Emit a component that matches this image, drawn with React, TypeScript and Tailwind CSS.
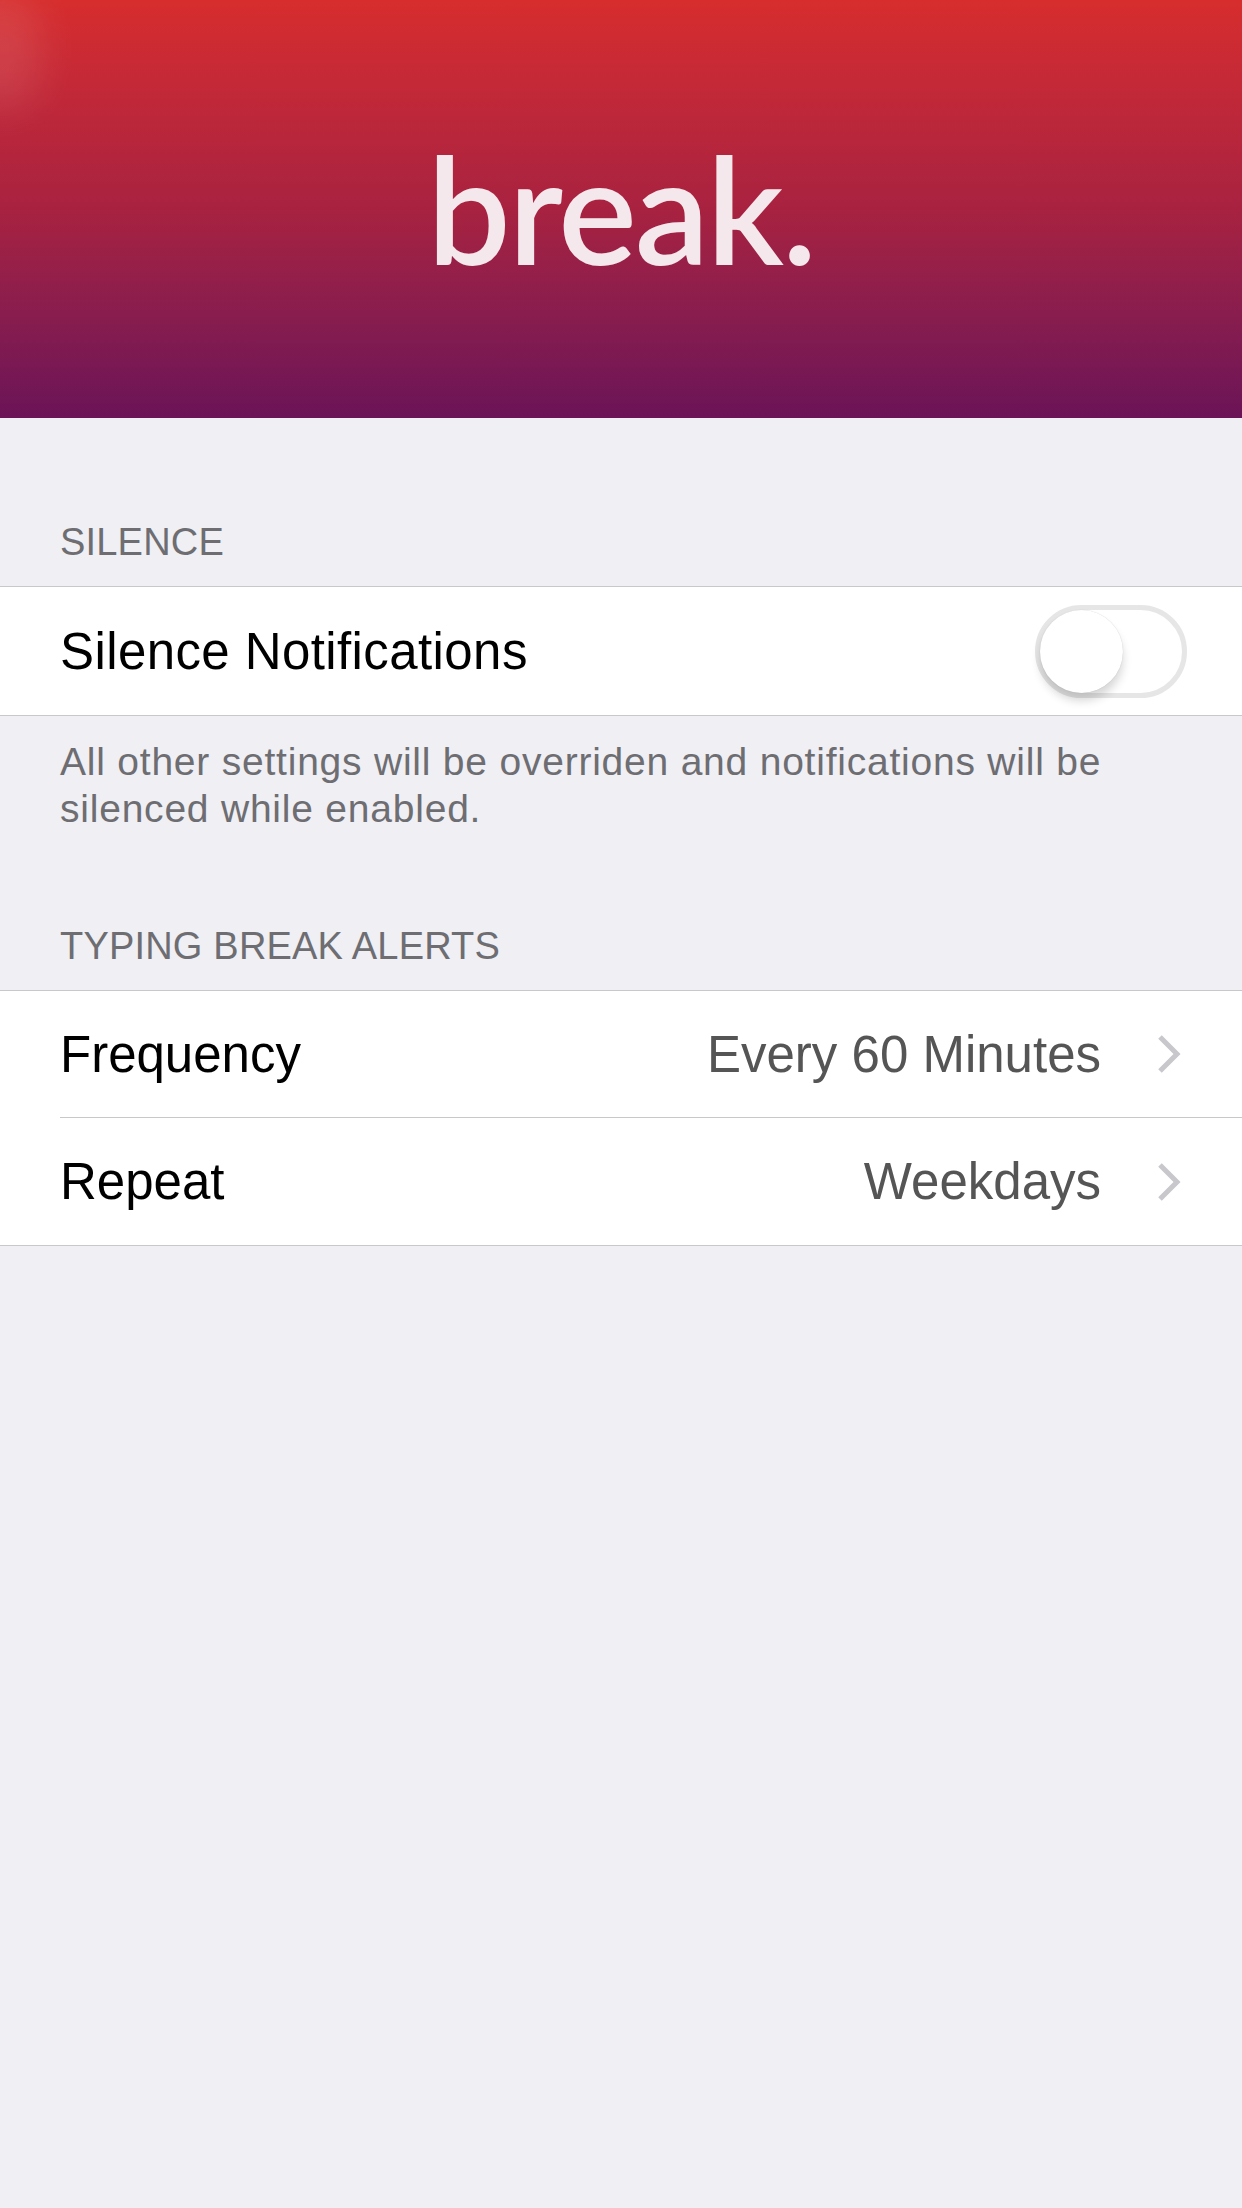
import { useState } from 'react';

function Toggle() {
  const [on, setOn] = useState(false);
  return (
    <button
      type="button"
      onClick={() => setOn((v) => !v)}
      className={`relative h-[93px] w-[152px] shrink-0 rounded-full border-[5px] ${on ? 'border-[#4cd964] bg-[#4cd964]' : 'border-[#e6e6e6] bg-white'}`}
    >
      <span
        className={`absolute top-0 h-[83px] w-[83px] rounded-full bg-white shadow-[0_8px_10px_rgba(0,0,0,0.16),0_0_1px_rgba(0,0,0,0.2)] ${on ? 'left-[59px]' : 'left-0'}`}
      />
    </button>
  );
}

function Chevron() {
  return (
    <svg width="24" height="38" viewBox="0 0 24 38" className="shrink-0">
      <path d="M2 2 L19 19 L2 36" fill="none" stroke="#c7c7cc" strokeWidth="5" />
    </svg>
  );
}

function SectionLabel({ children, top }: { children: string; top: string }) {
  return (
    <div className={`${top} pb-[24px] pl-[60px] text-[38px] leading-[39px] tracking-[0.005em] text-[#6d6d72]`}>
      {children}
    </div>
  );
}

export default function App() {
  return (
    <div
      className="min-h-[2208px] w-[1242px] bg-[#efeff4]"
      style={{ fontFamily: '"Liberation Sans", Arial, sans-serif' }}
    >
      <div className="relative h-[418px] overflow-hidden bg-gradient-to-b from-[#d72d2d] via-[#a82240] to-[#6b1357] pt-[134px] text-center">
        <div className="absolute -left-[40px] top-[-10px] h-[120px] w-[80px] rounded-full bg-white/10 blur-[20px]" />
        <h1
          className="text-[148px] font-semibold leading-none tracking-[-0.015em] text-[#f5e8ec]"
          style={{ fontFamily: 'Lato, "Open Sans", sans-serif' }}
        >
          break.
        </h1>
      </div>

      <SectionLabel top="pt-[105px]">SILENCE</SectionLabel>
      <div className="border-y border-[#c8c7cc] bg-white">
        <div className="flex h-[128px] items-center justify-between pl-[60px] pr-[55px]">
          <span className="text-[51px] leading-[51px] tracking-[0.008em] text-black">Silence Notifications</span>
          <Toggle />
        </div>
      </div>
      <p className="pl-[60px] pr-[60px] pt-[22px] text-[39px] leading-[47px] tracking-[0.02em] text-[#6d6d72]">
        All other settings will be overriden and notifications will be silenced while enabled.
      </p>

      <SectionLabel top="pt-[95px]">TYPING BREAK ALERTS</SectionLabel>
      <div className="border-y border-[#c8c7cc] bg-white">
        {[
          { label: 'Frequency', value: 'Every 60 Minutes' },
          { label: 'Repeat', value: 'Weekdays' },
        ].map((row, i) => (
          <div key={row.label} className="pl-[60px]">
            <div
              className={`flex items-center pr-[60px] ${i === 0 ? 'h-[127px] border-b border-[#c8c7cc]' : 'h-[127px]'}`}
            >
              <span className="flex-1 text-[51px] leading-[51px] text-black">{row.label}</span>
              <span className="mr-[57px] text-[51px] leading-[51px] text-[#555555]">{row.value}</span>
              <Chevron />
            </div>
          </div>
        ))}
      </div>
    </div>
  );
}
